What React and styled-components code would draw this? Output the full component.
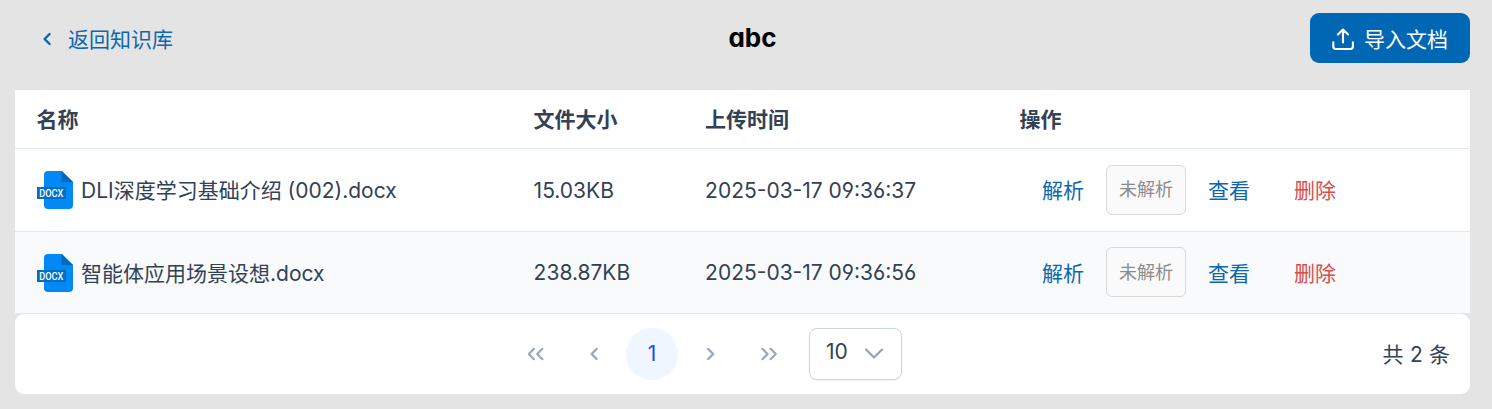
import React from "react";
import styled, { createGlobalStyle } from "styled-components";

const GlobalStyle = createGlobalStyle`
  *, *::before, *::after { box-sizing: border-box; }
  body {
    margin: 0;
    background: #e4e4e4;
    color: #334155;
    font-family: Inter, "Noto Sans CJK SC", sans-serif;
    font-feature-settings: "cv02", "cv03", "cv04", "cv11";
    font-size: 21px;
    font-weight: 385;
    line-height: 26px;
  }
  button { font: inherit; font-feature-settings: inherit; cursor: pointer; }
`;

const Page = styled.main`
  height: 409px;
  padding: 13px 22px 15px 15px;
  overflow: hidden;
`;

const Header = styled.header`
  display: grid;
  grid-template-columns: 1fr auto 1fr;
  align-items: center;
  height: 50px;
  margin-bottom: 27px;
`;

const BackButton = styled.button`
  display: flex;
  align-items: center;
  justify-self: start;
  gap: 15px;
  padding: 3px 0 0 27px;
  border: 0;
  background: none;
  color: #0c67ad;
`;

const Title = styled.h1`
  margin: 0 0 0 20px;
  color: #000;
  font-size: 26px;
  font-weight: 700;
  line-height: 32px;
`;

const ImportButton = styled.button`
  display: flex;
  align-items: center;
  justify-content: center;
  justify-self: end;
  gap: 9px;
  width: 160px;
  height: 50px;
  padding: 2px 0 0;
  border: 0;
  border-radius: 9px;
  background: #0067b5;
  color: #fff;
`;

const ButtonLabel = styled.span`
  padding-top: 1px;
`;

const Row = styled.div`
  display: grid;
  grid-template-columns: 497px 171.5px 314.5px 1fr;
  align-items: center;
  height: ${(p) => p.$height}px;
  padding-left: 22px;
  border-bottom: 1px solid #e2e8f0;
  background: ${(p) => (p.$striped ? "#f8fafc" : "#fff")};
`;

const HeadCell = styled.div`
  padding-top: 2px;
  margin-left: -0.5px;
  font-weight: 700;
`;

const Cell = styled.div`
  padding-top: 1px;
  margin-left: -0.4px;
  white-space: nowrap;
`;

const NameCell = styled.div`
  display: flex;
  align-items: center;
  gap: 8px;
  white-space: nowrap;
`;

const FileName = styled.span`
  padding-top: 2px;
`;

const Actions = styled.div`
  display: flex;
  align-items: center;
  padding-left: 22px;
`;

const TextButton = styled.button`
  padding: 2px 0 0;
  margin-right: ${(p) => p.$after || 0}px;
  border: 0;
  background: none;
  color: ${(p) => (p.$danger ? "#db4b4b" : "#0c67ad")};
`;

const Status = styled.span`
  display: flex;
  align-items: center;
  justify-content: center;
  width: 80px;
  height: 50px;
  margin: 0 22px 1px 0;
  padding-top: 1px;
  border: 1px solid #d9d9d9;
  border-radius: 6px;
  background: #fafafa;
  color: #8c8c8c;
  font-size: 18px;
`;

const Footer = styled.footer`
  display: grid;
  grid-template-columns: 495px auto 1fr;
  align-items: center;
  height: 80px;
  padding-right: 20px;
  border-radius: 9px;
  background: #fff;
`;

const FooterBack = styled.div`
  background: #e4e4e4;
`;

const Pager = styled.nav`
  display: flex;
  grid-column: 2;
  align-items: center;
`;

const PageButton = styled.button`
  display: flex;
  align-items: center;
  justify-content: center;
  width: 52px;
  height: 52px;
  margin-right: ${(p) => p.$after ?? 6}px;
  padding: 0;
  border: 0;
  border-radius: 50%;
  background: ${(p) => (p.$active ? "#eff6ff" : "transparent")};
  color: ${(p) => (p.$active ? "#1d4ed8" : "#9aa7b8")};
`;

const PageSize = styled.button`
  display: flex;
  align-items: center;
  justify-content: space-between;
  width: 93px;
  height: 52px;
  padding: 0 17px 0 16px;
  border: 1px solid #cbd5e1;
  border-radius: 8px;
  background: #fff;
  box-shadow: 0 1px 2px rgba(18, 18, 23, 0.05);
  color: #334155;
`;

const SizeValue = styled.span`
  padding-bottom: 4px;
`;

const Total = styled.div`
  justify-self: end;
  padding: 2px 0 0;
  word-spacing: 0.4px;
`;

const CHEVRONS = {
  left: "M7.6 2 2.6 7l5 5",
  right: "M3.2 2l5 5-5 5",
};

const Chevron = ({ dir }) => (
  <svg width="11" height="15" viewBox="0 0 11 15" fill="none" stroke="currentColor" strokeWidth="2.4" strokeLinecap="round" strokeLinejoin="round">
    <path d={CHEVRONS[dir]} />
  </svg>
);

const DoubleChevron = ({ dir }) => (
  <svg width="18" height="15" viewBox="0 0 18 15" fill="none" stroke="currentColor" strokeWidth="2.2" strokeLinecap="round" strokeLinejoin="round">
    <path d={dir === "left" ? "M7 1.8 1.8 7 7 12.2M15.4 1.8 10.2 7l5.2 5.2" : "M3.4 1.8 8.6 7l-5.2 5.2M11.6 1.8 16.8 7l-5.2 5.2"} />
  </svg>
);

const DownIcon = () => (
  <svg width="20" height="20" viewBox="0 0 20 20" fill="none" stroke="#94a3b8" strokeWidth="2.2" strokeLinecap="round" strokeLinejoin="round">
    <path d="m2 5.5 8 8 8-8" />
  </svg>
);

const UploadIcon = () => (
  <svg width="23" height="23" viewBox="0 0 23 23" fill="none" stroke="currentColor" strokeWidth="2.1" strokeLinecap="round" strokeLinejoin="round">
    <path d="M11 14.5V2M5.9 6.6 11 1.6l5.1 5M1.3 14.3v4.3q0 2.4 2.4 2.4h14.8q2.4 0 2.4-2.4v-4.3" />
  </svg>
);

const DocxIcon = () => (
  <svg width="36" height="38" viewBox="0 0 36 38">
    <path d="M11 0h14l11 11v23a4 4 0 0 1-4 4H11a4 4 0 0 1-4-4V4a4 4 0 0 1 4-4Z" fill="#0089f4" />
    <path d="M24.5 0 36 11H24.5Z" fill="#0069bf" />
    <path d="M0 16h29v12H0Z" fill="#0070c5" />
    <text x="2.2" y="26" fill="#fff" fontFamily="Roboto, sans-serif" fontWeight="500" fontSize="11.6" textLength="24.2" lengthAdjust="spacingAndGlyphs">DOCX</text>
  </svg>
);

const files = [
  { name: "DLI深度学习基础介绍 (002).docx", size: "15.03KB", time: "2025-03-17 09:36:37" },
  { name: "智能体应用场景设想.docx", size: "238.87KB", time: "2025-03-17 09:36:56" },
];

export default function App() {
  return (
    <>
      <GlobalStyle />
      <Page>
        <Header>
          <BackButton><Chevron dir="left" /><ButtonLabel>返回知识库</ButtonLabel></BackButton>
          <Title>abc</Title>
          <ImportButton><UploadIcon /><ButtonLabel>导入文档</ButtonLabel></ImportButton>
        </Header>
        <Row $height={59}>
          {["名称", "文件大小", "上传时间", "操作"].map((t) => <HeadCell key={t}>{t}</HeadCell>)}
        </Row>
        {files.map((file, i) => (
          <Row key={file.name} $height={i ? 82 : 83} $striped={i % 2 === 1}>
            <NameCell><DocxIcon /><FileName>{file.name}</FileName></NameCell>
            <Cell>{file.size}</Cell>
            <Cell>{file.time}</Cell>
            <Actions>
              <TextButton $after={22}>解析</TextButton>
              <Status>未解析</Status>
              <TextButton $after={44}>查看</TextButton>
              <TextButton $danger>删除</TextButton>
            </Actions>
          </Row>
        ))}
        <FooterBack>
          <Footer>
            <Pager>
              <PageButton><DoubleChevron dir="left" /></PageButton>
              <PageButton><Chevron dir="left" /></PageButton>
              <PageButton $active>1</PageButton>
              <PageButton><Chevron dir="right" /></PageButton>
              <PageButton $after={15}><DoubleChevron dir="right" /></PageButton>
              <PageSize><SizeValue>10</SizeValue><DownIcon /></PageSize>
            </Pager>
            <Total>共 2 条</Total>
          </Footer>
        </FooterBack>
      </Page>
    </>
  );
}
